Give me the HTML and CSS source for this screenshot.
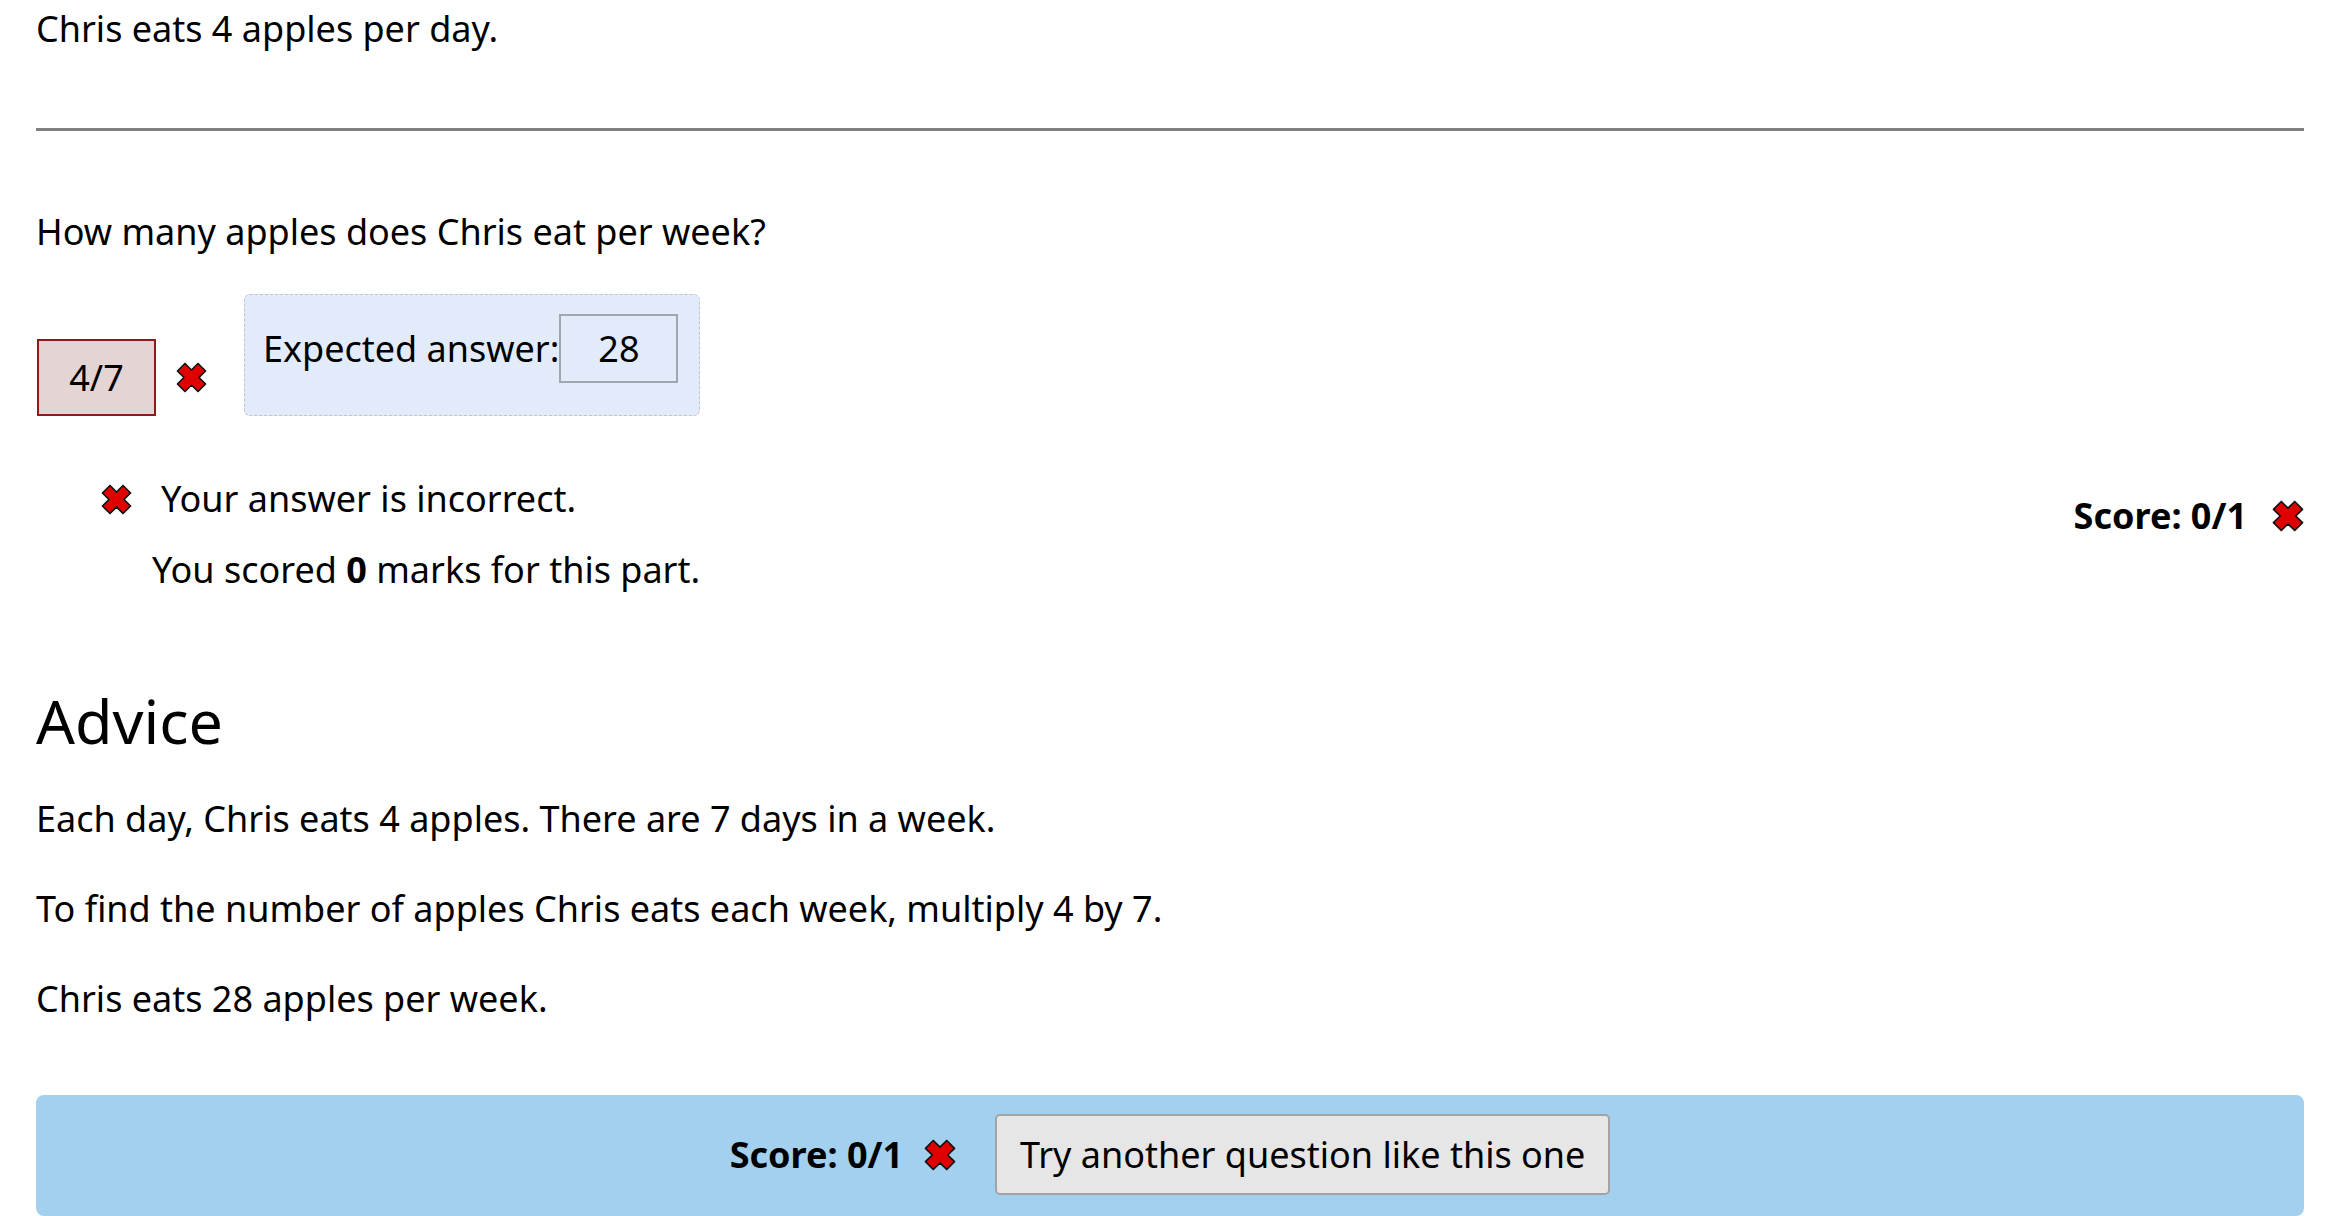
FILE: index.html
```html
<!DOCTYPE html>
<html lang="en">
<head>
<meta charset="utf-8">
<title>Question</title>
<link rel="stylesheet" href="styles.css">
</head>
<body>
<div class="page">
  <p class="statement">Chris eats 4 apples per day.</p>
  <hr class="divider">
  <p class="prompt">How many apples does Chris eat per week?</p>

  <div class="answer-row">
    <div class="student-answer">
      <span class="answer-input">4/7</span>
      <svg class="cross" viewBox="-1 -1 32 32" width="31" height="31" aria-hidden="true"><polygon transform="rotate(45 15 15)" points="9.5,0 20.5,0 20.5,9.5 30,9.5 30,20.5 20.5,20.5 20.5,30 9.5,30 9.5,20.5 0,20.5 0,9.5 9.5,9.5" fill="#e00000" stroke="#111" stroke-width="1.7" stroke-linejoin="round"/></svg>
    </div>
    <div class="expected">
      <span class="expected-label">Expected answer:</span>
      <span class="expected-value">28</span>
    </div>
  </div>

  <div class="feedback-row">
    <ul class="feedback">
      <li class="feedback-item">
        <svg class="cross" viewBox="-1 -1 32 32" width="31" height="31" aria-hidden="true"><polygon transform="rotate(45 15 15)" points="9.5,0 20.5,0 20.5,9.5 30,9.5 30,20.5 20.5,20.5 20.5,30 9.5,30 9.5,20.5 0,20.5 0,9.5 9.5,9.5" fill="#e00000" stroke="#111" stroke-width="1.7" stroke-linejoin="round"/></svg>
        <span>Your answer is incorrect.</span>
      </li>
      <li class="feedback-marks">You scored <b>0</b> marks for this part.</li>
    </ul>
    <div class="score">
      <span class="score-text">Score: 0/1</span>
      <svg class="cross" viewBox="-1 -1 32 32" width="32" height="32" aria-hidden="true"><polygon transform="rotate(45 15 15)" points="9.5,0 20.5,0 20.5,9.5 30,9.5 30,20.5 20.5,20.5 20.5,30 9.5,30 9.5,20.5 0,20.5 0,9.5 9.5,9.5" fill="#e00000" stroke="#111" stroke-width="1.7" stroke-linejoin="round"/></svg>
    </div>
  </div>

  <h2 class="advice-title">Advice</h2>
  <p class="advice">Each day, Chris eats 4 apples. There are 7 days in a week.</p>
  <p class="advice">To find the number of apples Chris eats each week, multiply 4 by 7.</p>
  <p class="advice">Chris eats 28 apples per week.</p>

  <div class="bar">
    <span class="score-text">Score: 0/1</span>
    <svg class="cross bar-cross" viewBox="-1 -1 32 32" width="32" height="32" aria-hidden="true"><polygon transform="rotate(45 15 15)" points="9.5,0 20.5,0 20.5,9.5 30,9.5 30,20.5 20.5,20.5 20.5,30 9.5,30 9.5,20.5 0,20.5 0,9.5 9.5,9.5" fill="#e00000" stroke="#111" stroke-width="1.7" stroke-linejoin="round"/></svg>
    <button class="retry" type="button">Try another question like this one</button>
  </div>
</div>
</body>
</html>
```
FILE: styles.css
```css
html, body {
  margin: 0;
  padding: 0;
  background: #ffffff;
}

body {
  font-family: "Noto Sans", "Open Sans", sans-serif;
  font-size: 36px;
  line-height: 54px;
  color: #000;
}

.page {
  padding: 2px 36px 0 36px;
}

.statement,
.prompt {
  margin: 0;
}

.divider {
  margin: 72px 0 74px 0;
  height: 3px;
  border: none;
  background: #808080;
}

.answer-row {
  display: flex;
  align-items: flex-end;
  margin-top: 35px;
}

.student-answer {
  display: flex;
  align-items: center;
}

.answer-input {
  box-sizing: border-box;
  width: 119px;
  height: 77px;
  margin-left: 1px;
  display: flex;
  align-items: center;
  justify-content: center;
  background: #e4d4d4;
  border: 2px solid #8b1a1a;
}

.student-answer .cross {
  margin-left: 20px;
}

.expected {
  box-sizing: border-box;
  display: flex;
  align-items: center;
  margin-left: 37px;
  padding: 19px 21px 32px 18px;
  background: #e1ebf9;
  border: 1.5px dashed #c4c4c4;
  border-radius: 6px;
}

.expected-value {
  box-sizing: border-box;
  width: 119px;
  height: 69px;
  display: flex;
  align-items: center;
  justify-content: center;
  border: 2px solid #9ea7b1;
}

.feedback-row {
  display: flex;
  justify-content: space-between;
  align-items: flex-start;
  margin-top: 56px;
}

.feedback {
  list-style: none;
  margin: 0;
  padding: 0;
}

.feedback-item {
  display: flex;
  align-items: center;
  gap: 29px;
  margin-left: 65px;
}

.feedback-marks {
  margin-left: 116px;
  margin-top: 17px;
}

.score {
  display: flex;
  align-items: center;
  gap: 25px;
  margin-top: 17px;
}

.score-text {
  font-weight: 700;
}

.advice-title {
  margin: 87px 0 0 0;
  font-size: 61px;
  line-height: 73px;
  font-weight: 400;
}

.advice {
  margin: 36px 0 0 0;
}

.advice-title + .advice {
  margin-top: 35px;
}

.bar {
  margin-top: 69px;
  display: flex;
  justify-content: center;
  align-items: center;
  padding: 19px 0 21px 0;
  background: #a2d0ee;
  border-radius: 8px;
}

.bar-cross {
  margin-left: 21px;
  margin-right: 39px;
}

.retry {
  box-sizing: border-box;
  height: 81px;
  padding: 0 23px;
  font-family: inherit;
  font-size: 36px;
  line-height: 54px;
  color: #000;
  background: #e6e6e6;
  border: 2px solid #a3a3a3;
  border-radius: 5px;
}

.cross {
  display: block;
  flex: none;
}
```
